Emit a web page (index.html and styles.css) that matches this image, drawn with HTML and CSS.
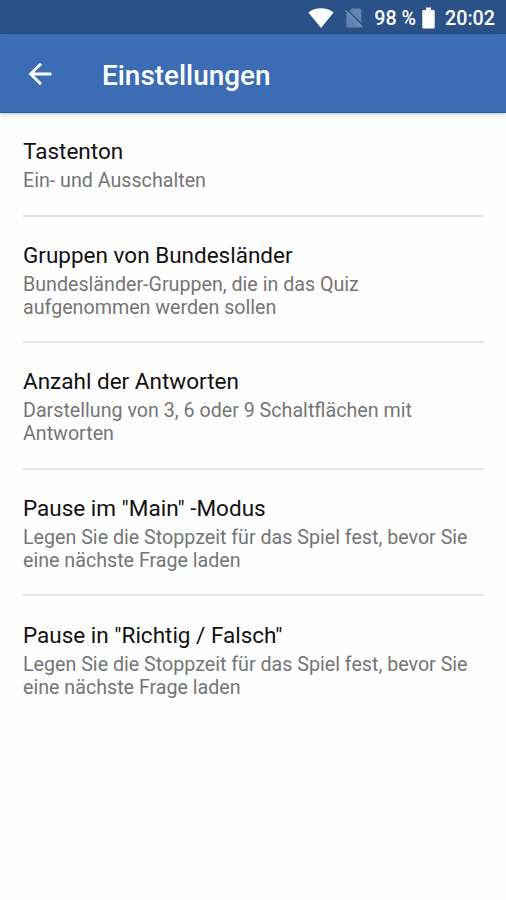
FILE: index.html
```html
<!DOCTYPE html>
<html lang="de">
<head>
    <meta charset="UTF-8">
    <meta name="viewport" content="width=device-width, initial-scale=1.0">
    <title>Einstellungen</title>
    <link rel="stylesheet" href="styles.css">
</head>
<body>
    <div class="status-bar">
        <svg class="wifi-icon" viewBox="0 0 26 20" fill="#fff">
            <path d="M13 20L0.4 4.4C3.6 1.7 8 0.2 13 0.2s9.4 1.5 12.6 4.2z"/>
        </svg>
        <svg class="sim-icon" viewBox="0 0 20 20">
            <path d="M8 0.5H15.8Q17.3 0.5 17.3 2V18Q17.3 19.5 15.8 19.5H3.8Q2.3 19.5 2.3 18V5.5z" fill="#6583b0"/>
            <path d="M2.6 1.2L19 17.6" stroke="#2b5288" stroke-width="1.6"/>
            <path d="M1.3 2.2L18.3 19.2" stroke="#7690b8" stroke-width="1.5"/>
        </svg>
        <span class="battery-level">98 %</span>
        <svg class="battery-icon" viewBox="0 0 13 22" fill="#fff">
            <path d="M4 0.5H9V3H11.5Q12.7 3 12.7 4.2V20.3Q12.7 21.5 11.5 21.5H1.5Q0.3 21.5 0.3 20.3V4.2Q0.3 3 1.5 3H4z"/>
        </svg>
        <span class="clock">20:02</span>
    </div>

    <div class="toolbar">
        <svg class="back-icon" viewBox="0 0 24 24" fill="#fff">
            <path d="M20 11H7.83l5.59-5.59L12 4l-8 8 8 8 1.41-1.41L7.83 13H20v-2z"/>
        </svg>
        <h1>Einstellungen</h1>
    </div>

    <div class="settings">
        <div class="setting">
            <h2>Tastenton</h2>
            <p>Ein- und Ausschalten</p>
        </div>
        <div class="setting">
            <h2>Gruppen von Bundesländer</h2>
            <p>Bundesländer-Gruppen, die in das Quiz<br>aufgenommen werden sollen</p>
        </div>
        <div class="setting">
            <h2>Anzahl der Antworten</h2>
            <p>Darstellung von 3, 6 oder 9 Schaltflächen mit<br>Antworten</p>
        </div>
        <div class="setting">
            <h2>Pause im "Main" -Modus</h2>
            <p>Legen Sie die Stoppzeit für das Spiel fest, bevor Sie<br>eine nächste Frage laden</p>
        </div>
        <div class="setting">
            <h2>Pause in "Richtig / Falsch"</h2>
            <p>Legen Sie die Stoppzeit für das Spiel fest, bevor Sie<br>eine nächste Frage laden</p>
        </div>
    </div>
</body>
</html>
```
FILE: styles.css
```css
body {
    font-family: Roboto, "Liberation Sans", sans-serif;
    background-color: #fefefe;
    margin: 0;
    height: 900px;
    overflow: hidden;
}

h1, h2, p {
    margin: 0;
}

.status-bar {
    display: flex;
    align-items: center;
    justify-content: flex-end;
    box-sizing: border-box;
    height: 34px;
    padding: 2px 11px 0 0;
    background-color: #2b5288;
    color: #fff;
    font-size: 19.7px;
    font-weight: 500;
    white-space: nowrap;
}

.wifi-icon {
    width: 26px;
    height: 20px;
    margin-right: 10px;
}

.sim-icon {
    width: 20px;
    height: 20px;
    margin-right: 10px;
}

.battery-level {
    margin-right: 6px;
}

.battery-icon {
    width: 13px;
    height: 22px;
    margin-right: 10px;
}

.toolbar {
    display: flex;
    align-items: center;
    box-sizing: border-box;
    height: 79px;
    padding: 2px 0 0 23px;
    background-color: #3b6cb4;
    border-bottom: 1px solid #1c60a8;
    box-shadow: 0 1px 5px rgba(0, 0, 0, 0.25);
    color: #fff;
}

.back-icon {
    width: 34px;
    height: 34px;
    margin-right: 45px;
}

.toolbar h1 {
    font-size: 27.9px;
    font-weight: 500;
    line-height: 34px;
    padding-top: 3px;
}

.settings {
    padding: 0 22px 0 23px;
}

.setting {
    padding: 24.2px 0 22.4px;
    border-bottom: 2px solid #e4e4e4;
}

.setting:last-child {
    border-bottom: none;
}

.setting h2 {
    color: #111;
    font-size: 22.5px;
    font-weight: 400;
    line-height: 29px;
    margin-bottom: 3px;
}

.setting p {
    color: #757575;
    font-size: 19.67px;
    line-height: 23px;
    white-space: nowrap;
}
```
